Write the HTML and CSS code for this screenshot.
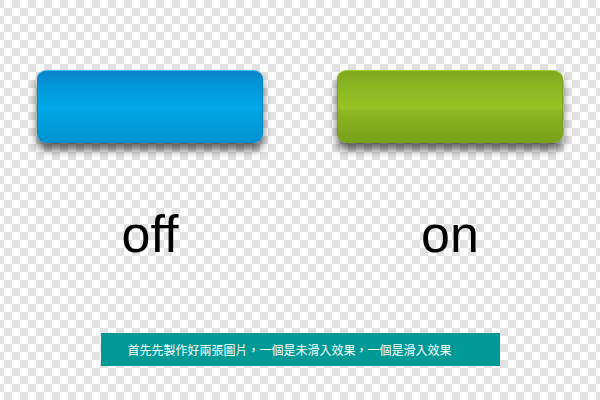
FILE: index.html
```html
<!DOCTYPE html>
<html lang="zh-Hant">
<head>
<meta charset="utf-8">
<link rel="stylesheet" href="styles.css">
</head>
<body>
<div class="page">
  <div class="row">
    <div class="col">
      <div class="btn btn-blue"></div>
      <div class="label">off</div>
    </div>
    <div class="col">
      <div class="btn btn-green"></div>
      <div class="label">on</div>
    </div>
  </div>
  <div class="caption">首先先製作好兩張圖片，一個是未滑入效果，一個是滑入效果</div>
</div>
</body>
</html>
```
FILE: styles.css
```css
html, body {
  margin: 0;
  padding: 0;
}
body {
  width: 600px;
  height: 400px;
  background-color: #ffffff;
  background-image:
    linear-gradient(45deg, #e2e2e2 25%, transparent 25%, transparent 75%, #e2e2e2 75%),
    linear-gradient(45deg, #e2e2e2 25%, transparent 25%, transparent 75%, #e2e2e2 75%);
  background-size: 16px 16px;
  background-position: 4px 0, 12px 8px;
  font-family: "Liberation Sans", Arial, sans-serif;
  overflow: hidden;
}
.page {
  display: flex;
  flex-direction: column;
  align-items: center;
  padding-top: 70px;
}
.row {
  display: flex;
  width: 600px;
}
.col {
  width: 300px;
  display: flex;
  flex-direction: column;
  align-items: center;
}
.btn {
  width: 226px;
  height: 73px;
  border-radius: 9px;
  box-sizing: border-box;
  box-shadow: 0 7px 8px rgba(0, 0, 0, 0.6);
}
.btn-blue {
  border: 1px solid #0d86c6;
  border-top-color: #3fbdf0;
  background: linear-gradient(to bottom, #0a84c8 0%, #0396d8 20%, #00a9e7 52%, #00a4e1 58%, #0092d0 100%);
}
.btn-green {
  border: 1px solid #78a01e;
  border-top-color: #a9cf3c;
  background: linear-gradient(to bottom, #7fa820 0%, #8bb623 20%, #97c323 52%, #8cb520 58%, #78a11c 100%);
}
.label {
  margin-top: 63px;
  font-size: 52px;
  line-height: 56px;
  color: #000;
}
.caption {
  margin-top: 71px;
  width: 399px;
  height: 33px;
  box-sizing: border-box;
  padding-left: 27px;
  background: #009a96;
  color: #ffffff;
  font-family: "Noto Sans CJK TC", "Noto Sans CJK SC", sans-serif;
  font-size: 12px;
  line-height: 33px;
}
```
